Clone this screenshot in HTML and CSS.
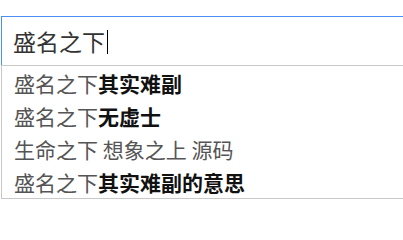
FILE: index.html
```html
<!DOCTYPE html>
<html lang="zh-CN">
<head>
<meta charset="utf-8">
<link rel="stylesheet" href="styles.css">
</head>
<body>
<div class="search">
  <div class="search-input"><span class="query">盛名之下</span><span class="caret"></span></div>
  <ul class="suggestions">
    <li class="item">盛名之下<b>其实难副</b></li>
    <li class="item">盛名之下<b>无虚士</b></li>
    <li class="item">生命之下 想象之上 源码</li>
    <li class="item">盛名之下<b>其实难副的意思</b></li>
  </ul>
</div>
</body>
</html>
```
FILE: styles.css
```css
html, body {
  margin: 0;
  padding: 0;
  background: #fff;
  overflow: hidden;
}
body {
  font-family: "Noto Sans CJK SC", "Liberation Sans", sans-serif;
}
.search {
  margin: 16px 0 0 1px;
  width: 402px;
}
.search-input {
  height: 48px;
  border: 1px solid #4a8ff5;
  border-bottom: none;
  border-right: none;
  display: flex;
  align-items: center;
  padding-left: 11px;
  font-size: 23px;
  color: #333;
}
.query {
  line-height: 1;
}
.caret {
  width: 1px;
  height: 24px;
  margin-left: 2px;
  margin-top: 2px;
  background: #000;
}
.suggestions {
  list-style: none;
  margin: 0;
  padding: 0;
  border: 1px solid #c8c8c8;
  border-right: none;
}
.item {
  height: 33px;
  display: flex;
  align-items: center;
  padding-left: 12px;
  font-size: 21px;
  color: #555;
  white-space: pre;
}
.item b {
  font-weight: 700;
  color: #111;
}
```
